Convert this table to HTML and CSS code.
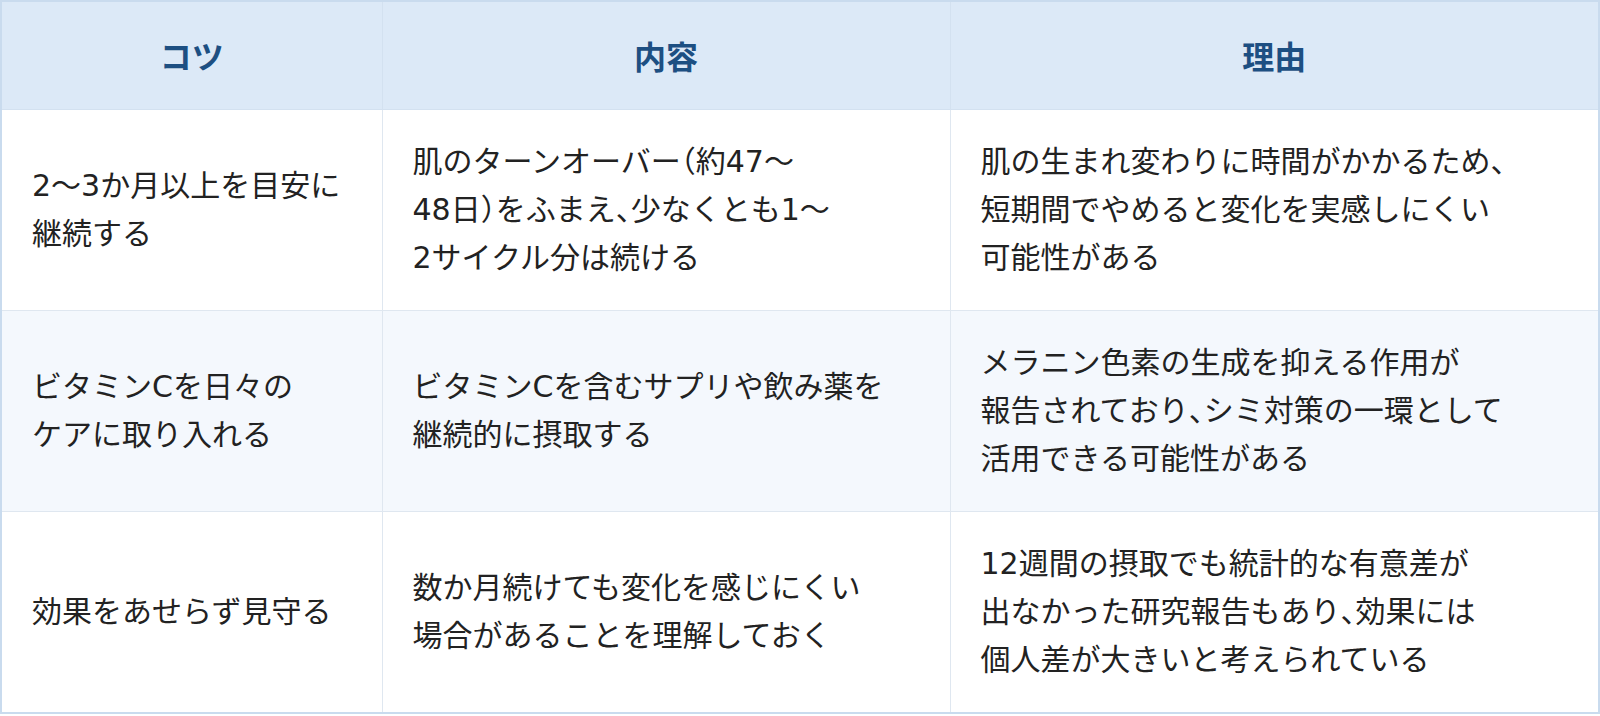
FILE: index.html
```
<!DOCTYPE html>
<html lang="ja">
<head>
<meta charset="utf-8">
<link rel="stylesheet" href="styles.css">
</head>
<body>
<table class="tips">
  <colgroup>
    <col class="c1">
    <col class="c2">
    <col class="c3">
  </colgroup>
  <thead>
    <tr><th>コツ</th><th>内容</th><th>理由</th></tr>
  </thead>
  <tbody>
    <tr>
      <td>2〜3か月以上を目安に<br>継続する</td>
      <td>肌のターンオーバー<span class="p">（</span>約47〜<br>48日<span class="p">）</span>をふまえ<span class="p">、</span>少なくとも1〜<br>2サイクル分は続ける</td>
      <td>肌の生まれ変わりに時間がかかるため<span class="p">、</span><br>短期間でやめると変化を実感しにくい<br>可能性がある</td>
    </tr>
    <tr class="alt">
      <td>ビタミンCを日々の<br>ケアに取り入れる</td>
      <td>ビタミンCを含むサプリや飲み薬を<br>継続的に摂取する</td>
      <td>メラニン色素の生成を抑える作用が<br>報告されており<span class="p">、</span>シミ対策の一環として<br>活用できる可能性がある</td>
    </tr>
    <tr>
      <td>効果をあせらず見守る</td>
      <td>数か月続けても変化を感じにくい<br>場合があることを理解しておく</td>
      <td>12週間の摂取でも統計的な有意差が<br>出なかった研究報告もあり<span class="p">、</span>効果には<br>個人差が大きいと考えられている</td>
    </tr>
  </tbody>
</table>
</body>
</html>
```
FILE: styles.css
```
html, body {
  margin: 0;
  padding: 0;
  background: #ffffff;
}
body {
  font-family: "Noto Sans CJK JP", "Noto Sans", sans-serif;
  color: #222222;
}
.tips {
  width: 1600px;
  border-collapse: collapse;
  table-layout: fixed;
  border: 2px solid #c9dbee;
}
.c1 { width: 381px; }
.c2 { width: 568px; }
.c3 { width: auto; }
.tips th {
  background: #dce9f7;
  color: #1d4f82;
  font-size: 32px;
  font-weight: 700;
  line-height: 51px;
  padding: 28px 30px;
  text-align: center;
  border: 1px solid #d3e1f0;
}
.tips td {
  font-family: "DejaVu Sans", "Noto Sans CJK JP", sans-serif;
  font-size: 30px;
  line-height: 48px;
  padding: 28px 30px;
  height: 144px;
  text-align: left;
  vertical-align: middle;
  white-space: nowrap;
  border: 1px solid #dfe7f0;
  background: #ffffff;
}
.tips tr.alt td {
  background: #f4f8fd;
}
.p {
  font-feature-settings: "halt";
}
```
